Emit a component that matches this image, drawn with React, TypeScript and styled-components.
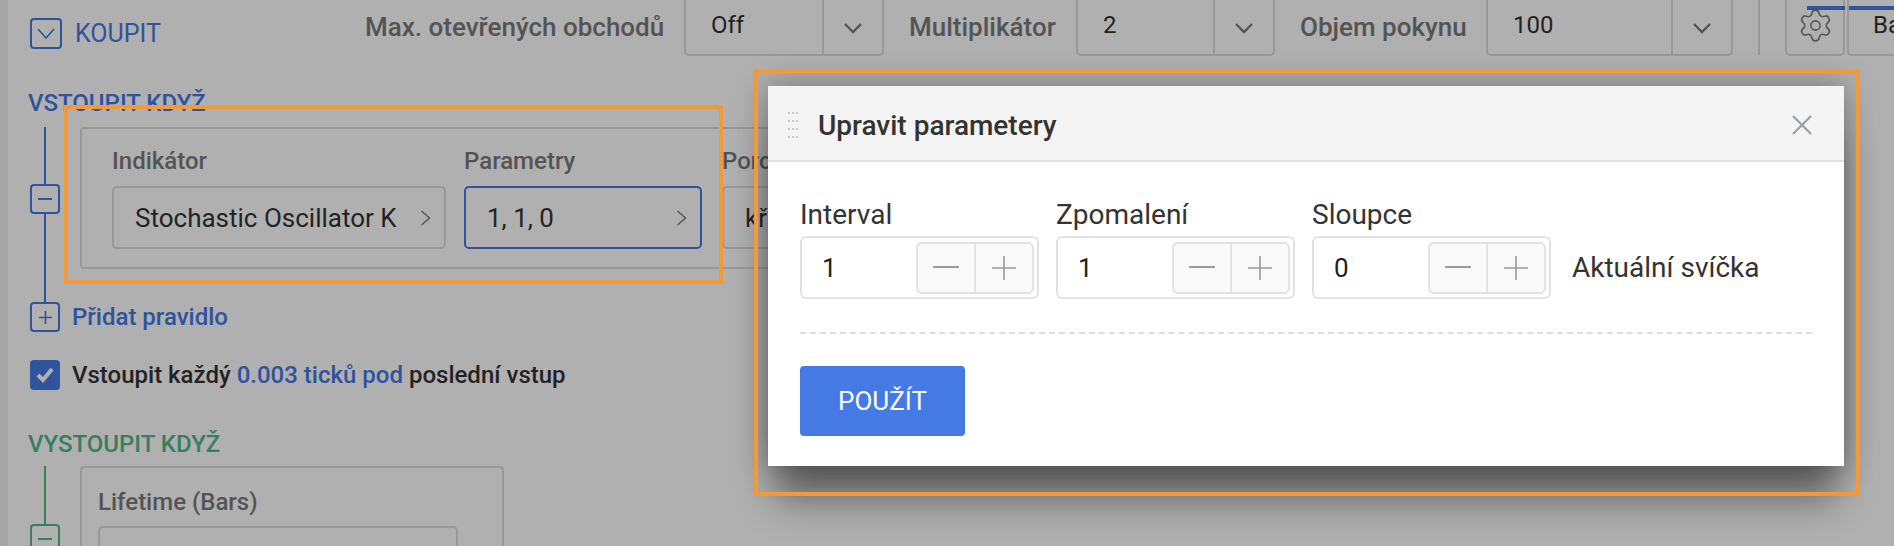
import React from "react";
import styled, { createGlobalStyle } from "styled-components";
import { Settings } from "lucide-react";

const Global = createGlobalStyle`
  html, body { margin: 0; padding: 0; background: #fff; overflow: hidden; }
  * { box-sizing: border-box; }
  body { font-family: Roboto, "Liberation Sans", sans-serif; }
`;

const BLUE = "#4579e4";
const GREEN = "#54b58a";

const Page = styled.div`
  position: relative;
  width: 1894px;
  height: 546px;
  overflow: hidden;
  display: flex;
  background: #fff;
`;
const Strip = styled.div`
  width: 8px;
  flex: none;
  background: #f0f0f0;
`;
const Main = styled.div`
  flex: 1;
  min-width: 0;
`;
const Toolbar = styled.div`
  height: 56px;
  display: flex;
  align-items: flex-start;
  padding-left: 22px;
`;
const BuyGroup = styled.div`
  width: 335px;
  flex: none;
  display: flex;
  align-items: center;
  gap: 13px;
  padding-top: 18px;
  color: ${BLUE};
  font-size: 25px;
  line-height: 31px;
`;
const IconBox = styled.span<{ $c?: string }>`
  width: 32px;
  height: 31px;
  flex: none;
  display: flex;
  align-items: center;
  justify-content: center;
  border: 2px solid ${(p) => p.$c ?? BLUE};
  border-radius: 4px;
`;
const ToolLabel = styled.span<{ $w: number }>`
  width: ${(p) => p.$w}px;
  flex: none;
  padding-top: 12px;
  font-size: 26px;
  line-height: 30px;
  font-weight: 500;
  color: #7a7a7a;
  white-space: nowrap;
`;
const Select = styled.div<{ $w: number; $mr: number }>`
  width: ${(p) => p.$w}px;
  margin-right: ${(p) => p.$mr}px;
  height: 56px;
  flex: none;
  display: flex;
  border: 2px solid #dedede;
  border-top: 0;
  border-radius: 0 0 5px 5px;
`;
const SelectValue = styled.span`
  flex: 1;
  padding: 10px 0 0 25px;
  font-size: 24px;
  line-height: 30px;
  color: #333;
`;
const SelectArrow = styled.span`
  width: 60px;
  flex: none;
  display: flex;
  align-items: center;
  justify-content: center;
  padding-top: 3px;
  border-left: 2px solid #dedede;
  color: #7a7a7a;
`;
const VLine = styled.span`
  width: 2px;
  height: 55px;
  flex: none;
  background: #dedede;
  margin-right: 25px;
`;
const GearButton = styled.span`
  position: relative;
  width: 60px;
  height: 56px;
  flex: none;
  display: flex;
  justify-content: center;
  padding-top: 7px;
  margin-right: 2px;
  color: #7a7a7a;
  border: 2px solid #dedede;
  border-top: 0;
  border-radius: 0 0 5px 5px;
  &::before {
    content: "";
    position: absolute;
    top: 6px;
    left: 20px;
    right: -2px;
    height: 4px;
    background: ${BLUE};
  }
`;
const BarsButton = styled.span`
  position: relative;
  width: 47px;
  height: 56px;
  flex: none;
  padding: 10px 0 0 24px;
  font-size: 24px;
  line-height: 30px;
  color: #333;
  white-space: nowrap;
  overflow: hidden;
  border: 2px solid #dedede;
  border-top: 0;
  border-right: 0;
  border-radius: 0 0 0 5px;
  &::before {
    content: "";
    position: absolute;
    top: 6px;
    left: 0;
    right: 0;
    height: 4px;
    background: ${BLUE};
  }
`;
const Content = styled.div`
  padding: 34px 0 0 20px;
`;
const Heading = styled.div<{ $c: string }>`
  font-size: 24px;
  line-height: 27px;
  font-weight: 500;
  color: ${(p) => p.$c};
  white-space: nowrap;
`;
const RuleRow = styled.div<{ $pb: number; $mt?: number }>`
  display: flex;
  gap: 20px;
  margin-left: 2px;
  margin-top: ${(p) => p.$mt ?? 0}px;
  padding-bottom: ${(p) => p.$pb}px;
`;
const Rail = styled.div<{ $c: string; $extend?: number }>`
  width: 30px;
  flex: none;
  display: flex;
  flex-direction: column;
  align-items: center;
  color: ${(p) => p.$c};
  margin-bottom: ${(p) => -(p.$extend ?? 0)}px;
`;
const RailLine = styled.span<{ $h?: number; $c: string }>`
  width: 2px;
  background: ${(p) => p.$c};
  ${(p) => (p.$h ? `height: ${p.$h}px; flex: none;` : "flex: 1;")}
`;
const RailBox = styled.span<{ $c: string }>`
  width: 30px;
  height: 30px;
  flex: none;
  display: flex;
  align-items: center;
  justify-content: center;
  color: ${(p) => p.$c};
  border: 2px solid ${(p) => p.$c};
  border-radius: 4px;
`;
const Card = styled.div<{ $w: number; $h: number; $p: string }>`
  width: ${(p) => p.$w}px;
  height: ${(p) => p.$h}px;
  flex: none;
  padding: ${(p) => p.$p};
  display: flex;
  gap: 18px;
  border: 2px solid #dedede;
  border-radius: 4px;
`;
const CardField = styled.div<{ $w: number; $ml?: number }>`
  width: ${(p) => p.$w}px;
  margin-left: ${(p) => p.$ml ?? 0}px;
  flex: none;
`;
const FieldLabel = styled.div<{ $mb?: number }>`
  font-size: 24px;
  line-height: 28px;
  font-weight: 500;
  color: #7a7a7a;
  margin-bottom: ${(p) => p.$mb ?? 11}px;
  white-space: nowrap;
`;
const FieldBox = styled.div<{ $active?: boolean }>`
  height: 63px;
  display: flex;
  align-items: center;
  justify-content: space-between;
  padding: 1px 12px 0 21px;
  font-size: 26px;
  color: #333;
  white-space: nowrap;
  border: 2px solid ${(p) => (p.$active ? BLUE : "#dedede")};
  border-radius: 5px;
`;
const Chevron = styled.span`
  color: #7a7a7a;
  display: flex;
`;
const AddRow = styled.div`
  display: flex;
  align-items: center;
  gap: 12px;
  height: 30px;
  margin-left: 2px;
`;
const AddText = styled.span`
  font-size: 24px;
  font-weight: 500;
  color: ${BLUE};
`;
const CheckRow = styled.div`
  display: flex;
  align-items: center;
  gap: 12px;
  margin: 28px 0 0 2px;
  height: 30px;
  font-size: 24px;
  font-weight: 500;
  color: #333;
  white-space: nowrap;
`;
const CheckBox = styled.span`
  width: 30px;
  height: 30px;
  flex: none;
  display: flex;
  align-items: center;
  justify-content: center;
  border-radius: 4px;
  background: ${BLUE};
`;
const Accent = styled.span`
  color: ${BLUE};
`;
const ExitHeading = styled(Heading)`
  margin-top: 41px;
  margin-bottom: 8px;
`;
const Overlay = styled.div`
  position: absolute;
  inset: 0;
  background: rgba(0, 0, 0, 0.31);
`;
const Modal = styled.div`
  position: absolute;
  left: 768px;
  top: 86px;
  width: 1076px;
  height: 380px;
  background: #fff;
  box-shadow: 0 0 30px rgba(0, 0, 0, 0.36), 0 42px 36px -8px rgba(0, 0, 0, 0.42);
`;
const ModalHeader = styled.div`
  height: 76px;
  display: flex;
  align-items: center;
  padding: 4px 32px 0 20px;
  background: #f4f4f4;
  border-bottom: 2px solid #e2e2e2;
`;
const Grip = styled.svg`
  width: 10px;
  height: 26px;
  flex: none;
  margin-right: 20px;
`;
const ModalTitle = styled.div`
  flex: 1;
  font-size: 28px;
  font-weight: 500;
  color: #333;
`;
const ModalBody = styled.div`
  padding: 38px 32px 0;
`;
const ParamRow = styled.div`
  display: flex;
  align-items: flex-end;
  gap: 17px;
  padding-bottom: 33px;
  border-bottom: 2px dashed #dcdcdc;
`;
const ParamField = styled.div`
  width: 239px;
  flex: none;
`;
const ParamLabel = styled.div`
  font-size: 28px;
  line-height: 30px;
  margin-bottom: 6px;
  color: #333;
`;
const NumberBox = styled.div`
  height: 63px;
  display: flex;
  align-items: center;
  justify-content: space-between;
  padding: 0 3px 0 20px;
  font-size: 26px;
  color: #222;
  border: 2px solid #e2e2e2;
  border-radius: 6px;
`;
const Stepper = styled.div`
  width: 118px;
  height: 52px;
  display: flex;
  background: #fafafa;
  border: 2px solid #e2e2e2;
  border-radius: 6px;
`;
const StepCell = styled.span`
  flex: 1;
  display: flex;
  align-items: center;
  justify-content: center;
  color: #9a9a9a;
  & + & {
    border-left: 2px solid #e2e2e2;
  }
`;
const Suffix = styled.span`
  height: 63px;
  display: flex;
  align-items: center;
  margin-left: 4px;
  font-size: 28px;
  color: #333;
  white-space: nowrap;
`;
const ApplyButton = styled.button`
  display: block;
  width: 165px;
  height: 70px;
  margin-top: 32px;
  border: 0;
  border-radius: 4px;
  background: ${BLUE};
  color: #fff;
  font: 400 26px Roboto, sans-serif;
`;
const Highlight = styled.div<{ $l: number; $t: number; $w: number; $h: number }>`
  position: absolute;
  left: ${(p) => p.$l}px;
  top: ${(p) => p.$t}px;
  width: ${(p) => p.$w}px;
  height: ${(p) => p.$h}px;
  border: 4px solid #f29a38;
`;

const Down = () => (
  <svg width="20" height="14" viewBox="0 0 20 14" fill="none" stroke="currentColor" strokeWidth="2.3">
    <path d="M2 2l8 8 8-8" />
  </svg>
);
const Right = () => (
  <svg width="12" height="20" viewBox="0 0 12 20" fill="none" stroke="currentColor" strokeWidth="1.5">
    <path d="M1.5 3l8 7-8 7" />
  </svg>
);
const Minus = () => (
  <svg width="14" height="4" viewBox="0 0 14 4"><path d="M0 2h14" stroke="currentColor" strokeWidth="2" /></svg>
);
const Plus = () => (
  <svg width="13" height="13" viewBox="0 0 13 13" fill="none" stroke="currentColor" strokeWidth="1.6">
    <path d="M0 6.5h13M6.5 0v13" />
  </svg>
);
const StepMinus = () => (
  <svg width="26" height="4" viewBox="0 0 26 4"><path d="M0 1h26" stroke="currentColor" strokeWidth="2" /></svg>
);
const StepPlus = () => (
  <svg width="24" height="24" viewBox="0 0 24 24" fill="none" stroke="currentColor" strokeWidth="1.6">
    <path d="M0 12h24M12 0v24" />
  </svg>
);

const rows = [0, 1, 2, 3];
const params = [
  { label: "Interval", value: "1" },
  { label: "Zpomalení", value: "1" },
  { label: "Sloupce", value: "0" },
];

export default function App() {
  return (
    <Page>
      <Global />
      <Strip />
      <Main>
        <Toolbar>
          <BuyGroup>
            <IconBox>
              <svg width="18" height="12" viewBox="0 0 18 12" fill="none" stroke={BLUE} strokeWidth="1.6">
                <path d="M1 1l8 9 8-9" />
              </svg>
            </IconBox>
            KOUPIT
          </BuyGroup>
          <ToolLabel $w={319}>Max. otevřených obchodů</ToolLabel>
          <Select $w={200} $mr={25}>
            <SelectValue>Off</SelectValue>
            <SelectArrow><Down /></SelectArrow>
          </Select>
          <ToolLabel $w={167}>Multiplikátor</ToolLabel>
          <Select $w={199} $mr={25}>
            <SelectValue>2</SelectValue>
            <SelectArrow><Down /></SelectArrow>
          </Select>
          <ToolLabel $w={186}>Objem pokynu</ToolLabel>
          <Select $w={247} $mr={25}>
            <SelectValue>100</SelectValue>
            <SelectArrow><Down /></SelectArrow>
          </Select>
          <VLine />
          <GearButton><Settings size={37} strokeWidth={1} /></GearButton>
          <BarsButton>Ba</BarsButton>
        </Toolbar>
        <Content>
          <Heading $c={BLUE}>VSTOUPIT KDYŽ</Heading>
          <RuleRow $pb={33} $mt={10}>
            <Rail $c={BLUE} $extend={33}>
              <RailLine $h={57} $c={BLUE} />
              <RailBox $c={BLUE}><Minus /></RailBox>
              <RailLine $c={BLUE} />
            </Rail>
            <Card $w={1000} $h={142} $p="18px 30px 0">
              <CardField $w={334}>
                <FieldLabel>Indikátor</FieldLabel>
                <FieldBox>Stochastic Oscillator K<Chevron><Right /></Chevron></FieldBox>
              </CardField>
              <CardField $w={238}>
                <FieldLabel>Parametry</FieldLabel>
                <FieldBox $active>1, 1, 0<Chevron><Right /></Chevron></FieldBox>
              </CardField>
              <CardField $w={240} $ml={2}>
                <FieldLabel>Porovnání</FieldLabel>
                <FieldBox>křížení<Chevron><Right /></Chevron></FieldBox>
              </CardField>
            </Card>
          </RuleRow>
          <AddRow>
            <RailBox $c={BLUE}><Plus /></RailBox>
            <AddText>Přidat pravidlo</AddText>
          </AddRow>
          <CheckRow>
            <CheckBox>
              <svg width="18" height="16" viewBox="0 0 18 16" fill="none" stroke="#fff" strokeWidth="4">
                <path d="M2 8l5 5 9-11" />
              </svg>
            </CheckBox>
            <span>Vstoupit každý <Accent>0.003 ticků pod</Accent> poslední vstup</span>
          </CheckRow>
          <ExitHeading $c={GREEN}>VYSTOUPIT KDYŽ</ExitHeading>
          <RuleRow $pb={0}>
            <Rail $c={GREEN}>
              <RailLine $h={58} $c={GREEN} />
              <RailBox $c={GREEN}><Minus /></RailBox>
            </Rail>
            <Card $w={424} $h={140} $p="20px 16px 0">
              <CardField $w={360}>
                <FieldLabel $mb={10}>Lifetime (Bars)</FieldLabel>
                <FieldBox />
              </CardField>
            </Card>
          </RuleRow>
        </Content>
      </Main>
      <Overlay />
      <Modal>
        <ModalHeader>
          <Grip viewBox="0 0 10 26" fill="#c8c8c8">
            {rows.flatMap((r) => [0, 4, 8].map((c) => (
              <rect key={`${r}-${c}`} x={c} y={r * 8} width="2" height="2" />
            )))}
          </Grip>
          <ModalTitle>Upravit parametery</ModalTitle>
          <svg width="20" height="20" viewBox="0 0 20 20" fill="none" stroke="#9aa0a6" strokeWidth="2.2">
            <path d="M1 1l18 18M19 1L1 19" />
          </svg>
        </ModalHeader>
        <ModalBody>
          <ParamRow>
            {params.map((p) => (
              <ParamField key={p.label}>
                <ParamLabel>{p.label}</ParamLabel>
                <NumberBox>
                  {p.value}
                  <Stepper>
                    <StepCell><StepMinus /></StepCell>
                    <StepCell><StepPlus /></StepCell>
                  </Stepper>
                </NumberBox>
              </ParamField>
            ))}
            <Suffix>Aktuální svíčka</Suffix>
          </ParamRow>
          <ApplyButton>POUŽÍT</ApplyButton>
        </ModalBody>
      </Modal>
      <Highlight $l={64} $t={105} $w={659} $h={179} />
      <Highlight $l={754} $t={69} $w={1106} $h={427} />
    </Page>
  );
}
